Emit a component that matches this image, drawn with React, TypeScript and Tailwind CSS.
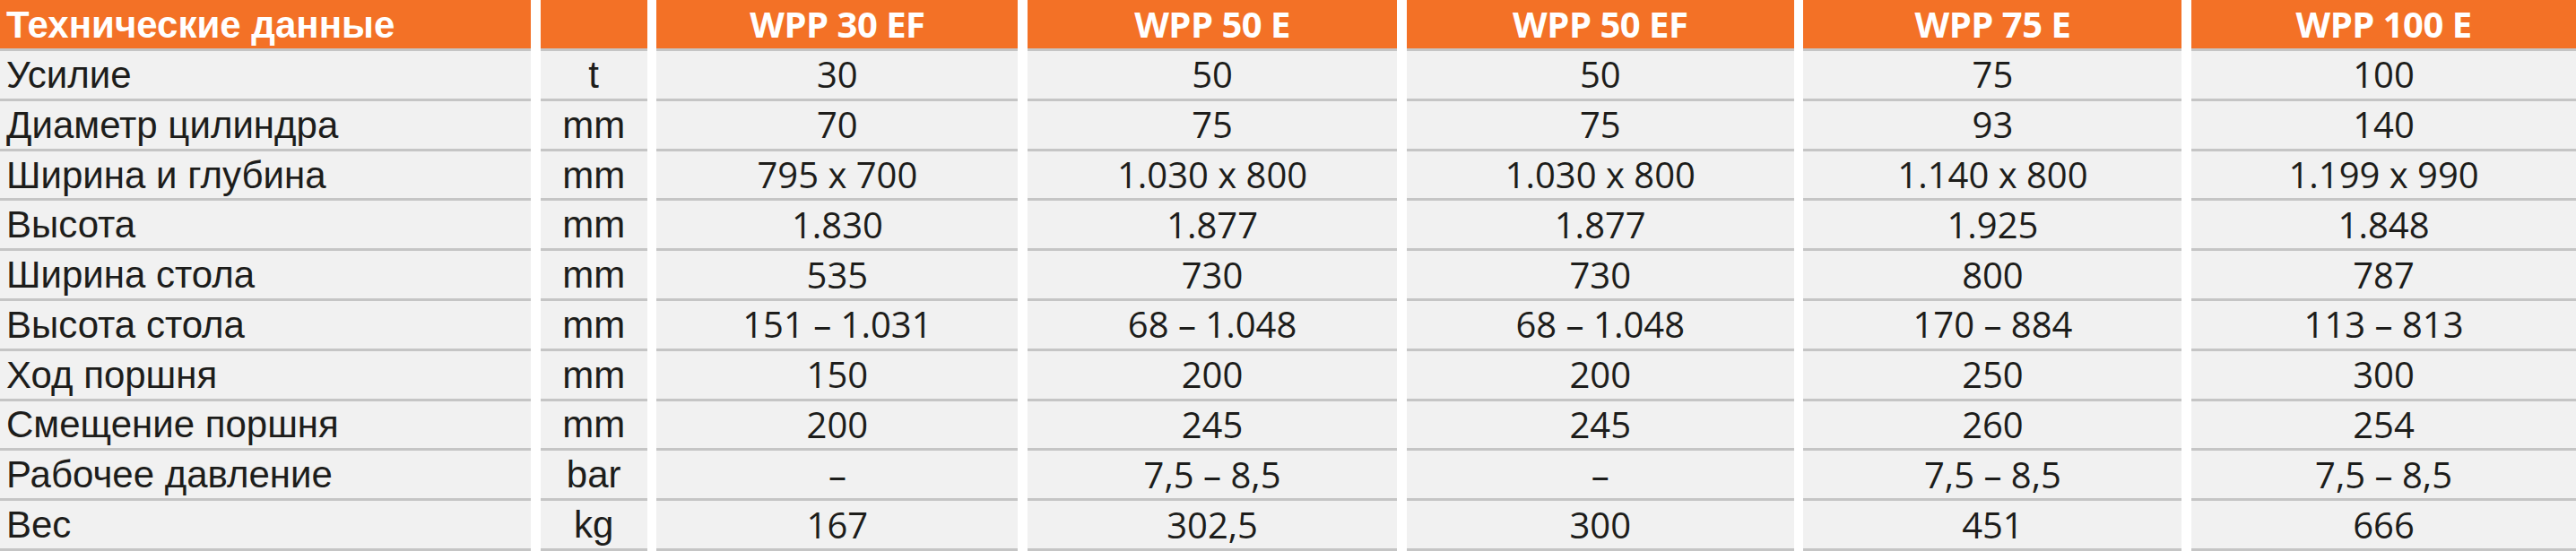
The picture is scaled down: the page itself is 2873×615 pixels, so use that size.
import React from 'react';

const models = ['WPP 30 EF', 'WPP 50 E', 'WPP 50 EF', 'WPP 75 E', 'WPP 100 E'];

const rows = [
  { label: 'Усилие', unit: 't', values: ['30', '50', '50', '75', '100'] },
  { label: 'Диаметр цилиндра', unit: 'mm', values: ['70', '75', '75', '93', '140'] },
  { label: 'Ширина и глубина', unit: 'mm', values: ['795 x 700', '1.030 x 800', '1.030 x 800', '1.140 x 800', '1.199 x 990'] },
  { label: 'Высота', unit: 'mm', values: ['1.830', '1.877', '1.877', '1.925', '1.848'] },
  { label: 'Ширина стола', unit: 'mm', values: ['535', '730', '730', '800', '787'] },
  { label: 'Высота стола', unit: 'mm', values: ['151 – 1.031', '68 – 1.048', '68 – 1.048', '170 – 884', '113 – 813'] },
  { label: 'Ход поршня', unit: 'mm', values: ['150', '200', '200', '250', '300'] },
  { label: 'Смещение поршня', unit: 'mm', values: ['200', '245', '245', '260', '254'] },
  { label: 'Рабочее давление', unit: 'bar', values: ['–', '7,5 – 8,5', '–', '7,5 – 8,5', '7,5 – 8,5'] },
  { label: 'Вес', unit: 'kg', values: ['167', '302,5', '300', '451', '666'] },
];

const arial = "font-['Liberation_Sans',Arial,sans-serif]";
const myriad = "font-['Open_Sans','Noto_Sans',sans-serif]";

const TechTable = () => {
  return (
    <div className="w-[2873px] h-[615px] bg-white overflow-hidden">
      <div className="grid grid-cols-[592px_119px_403px_412px_432px_422px_1fr] gap-x-[10.7px]">
        {/* header */}
        <div className={`h-[57px] bg-[#f37126] border-b-[3px] border-[#c5c5c5] flex items-center pl-[7px] text-white text-[42px] font-bold ${arial}`}>
          Технические данные
        </div>
        <div className="h-[57px] bg-[#f37126] border-b-[3px] border-[#c5c5c5]" />
        {models.map((m) => (
          <div
            key={m}
            className={`h-[57px] bg-[#f37126] border-b-[3px] border-[#c5c5c5] flex items-center justify-center text-white text-[40px] font-bold tracking-[-0.5px] [font-stretch:92%] ${myriad}`}
          >
            {m}
          </div>
        ))}

        {/* rows */}
        {rows.map((row) => (
          <React.Fragment key={row.label}>
            <div className={`h-[55.8px] bg-[#f1f1f1] border-b-[3px] border-[#c5c5c5] flex items-center pl-[7px] text-[#1d1d1b] text-[42px] ${arial}`}>
              {row.label}
            </div>
            <div className={`h-[55.8px] bg-[#f1f1f1] border-b-[3px] border-[#c5c5c5] flex items-center justify-center text-[#1d1d1b] text-[42px] ${arial}`}>
              {row.unit}
            </div>
            {row.values.map((v, i) => (
              <div
                key={i}
                className={`h-[55.8px] bg-[#f1f1f1] border-b-[3px] border-[#c5c5c5] flex items-center justify-center text-[#1d1d1b] text-[40px] ${myriad}`}
              >
                {v}
              </div>
            ))}
          </React.Fragment>
        ))}
      </div>
    </div>
  );
};

export default TechTable;
